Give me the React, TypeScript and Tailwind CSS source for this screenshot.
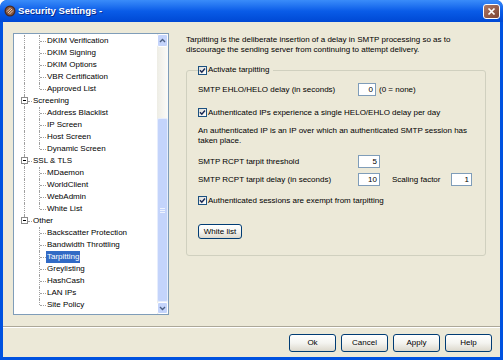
import React from 'react';

type Row = { label: string; kind: 'root' | 'child'; last?: boolean; rootLine?: 'full' | 'top' | 'none'; selected?: boolean };

const rows: Row[] = [
  { label: 'DKIM Verification', kind: 'child', rootLine: 'full' },
  { label: 'DKIM Signing', kind: 'child', rootLine: 'full' },
  { label: 'DKIM Options', kind: 'child', rootLine: 'full' },
  { label: 'VBR Certification', kind: 'child', rootLine: 'full' },
  { label: 'Approved List', kind: 'child', last: true, rootLine: 'full' },
  { label: 'Screening', kind: 'root', rootLine: 'full' },
  { label: 'Address Blacklist', kind: 'child', rootLine: 'full' },
  { label: 'IP Screen', kind: 'child', rootLine: 'full' },
  { label: 'Host Screen', kind: 'child', rootLine: 'full' },
  { label: 'Dynamic Screen', kind: 'child', last: true, rootLine: 'full' },
  { label: 'SSL & TLS', kind: 'root', rootLine: 'full' },
  { label: 'MDaemon', kind: 'child', rootLine: 'full' },
  { label: 'WorldClient', kind: 'child', rootLine: 'full' },
  { label: 'WebAdmin', kind: 'child', rootLine: 'full' },
  { label: 'White List', kind: 'child', last: true, rootLine: 'full' },
  { label: 'Other', kind: 'root', rootLine: 'top' },
  { label: 'Backscatter Protection', kind: 'child', rootLine: 'none' },
  { label: 'Bandwidth Throttling', kind: 'child', rootLine: 'none' },
  { label: 'Tarpitting', kind: 'child', rootLine: 'none', selected: true },
  { label: 'Greylisting', kind: 'child', rootLine: 'none' },
  { label: 'HashCash', kind: 'child', rootLine: 'none' },
  { label: 'LAN IPs', kind: 'child', rootLine: 'none' },
  { label: 'Site Policy', kind: 'child', last: true, rootLine: 'none' },
];

function TreeRow({ row }: { row: Row }) {
  return (
    <div className="relative h-[12px] leading-[12px] whitespace-nowrap">
      {/* tree connector lines */}
      {row.rootLine === 'full' && <span className="absolute left-[10px] top-0 h-[12px] border-l border-dotted border-[#a0a0a0]" />}
      {row.rootLine === 'top' && <span className="absolute left-[10px] top-0 h-[6px] border-l border-dotted border-[#a0a0a0]" />}
      {row.kind === 'child' && (
        <>
          <span className={`absolute left-[25px] top-0 border-l border-dotted border-[#a0a0a0] ${row.last ? 'h-[6px]' : 'h-[12px]'}`} />
          <span className="absolute left-[26px] top-[6px] w-[6px] border-t border-dotted border-[#a0a0a0]" />
        </>
      )}
      {row.kind === 'root' && (
        <>
          <span className="absolute left-[14px] top-[6px] w-[4px] border-t border-dotted border-[#a0a0a0]" />
          <span className="absolute left-[7px] top-[2px] w-[7px] h-[7px] bg-white border border-[#8a8a8a] flex items-center justify-center">
            <span className="w-[3px] h-[1px] bg-black" />
          </span>
        </>
      )}
      <span
        className={`absolute top-0 px-[1px] h-[12px] ${row.kind === 'root' ? 'left-[18px]' : 'left-[32px]'} ${
          row.selected ? 'bg-[#316ac5] text-white' : 'text-black'
        }`}
      >
        {row.label}
      </span>
    </div>
  );
}

function Arrow({ up }: { up?: boolean }) {
  return (
    <svg width="7" height="5" viewBox="0 0 7 5">
      <path d={up ? 'M1 4 L3.5 1.5 L6 4' : 'M1 1 L3.5 3.5 L6 1'} fill="none" stroke="#4d6185" strokeWidth="1.4" />
    </svg>
  );
}

function Scrollbar() {
  return (
    <div className="w-[11px] flex flex-col bg-gradient-to-r from-[#eeede5] to-[#fbfbf9]">
      <div className="h-[13px] rounded-[2px] border border-white bg-[#c4d4fb] flex items-center justify-center">
        <Arrow up />
      </div>
      <div className="h-[71px]" />
      <div className="h-[184px] rounded-[2px] border border-[#e6edfd] bg-[#c4d4fb] flex flex-col items-center justify-center gap-[1px]">
        <span className="w-[5px] h-[1px] bg-[#eef3fe]" />
        <span className="w-[5px] h-[1px] bg-[#eef3fe]" />
        <span className="w-[5px] h-[1px] bg-[#eef3fe]" />
      </div>
      <div className="h-[12px] rounded-[2px] border border-white bg-[#c4d4fb] flex items-center justify-center">
        <Arrow />
      </div>
    </div>
  );
}

function Check() {
  return (
    <span className="w-[9px] h-[9px] shrink-0 border border-[#1c5180] bg-gradient-to-br from-[#dcdcd7] to-white flex items-center justify-center">
      <svg width="7" height="7" viewBox="0 0 7 7">
        <path d="M1 3.3 L2.8 5.2 L6 1.6" fill="none" stroke="#1b2a55" strokeWidth="1.5" />
      </svg>
    </span>
  );
}

function Field({ value, w }: { value: string; w: string }) {
  return (
    <span className={`${w} h-[13px] bg-white border border-[#7f9db9] text-right pr-[2px] leading-[11px]`}>{value}</span>
  );
}

function XpButton({ label, w = 'w-[47px]', h = 'h-[18px]' }: { label: string; w?: string; h?: string }) {
  return (
    <button className={`${w} ${h} rounded-[3px] border border-[#003c74] bg-gradient-to-b from-white via-[#f4f4f0] to-[#dcd8cc] text-black text-[8px] leading-none`}>
      {label}
    </button>
  );
}

export default function App() {
  return (
    <div className="w-[503px] h-[360px] bg-[#0052e0] rounded-t-[7px] flex flex-col font-['Liberation_Sans',Arial,sans-serif] text-[8px] text-black overflow-hidden">
      {/* Title bar */}
      <div className="h-[22px] shrink-0 flex items-center rounded-t-[7px] bg-gradient-to-b from-[#3a8cf9] via-[#0a5ce8] to-[#0048d4] relative">
        <svg className="ml-[4px]" width="12" height="12" viewBox="0 0 12 12">
          <circle cx="6" cy="6" r="5.5" fill="#4a2a20" />
          <circle cx="6" cy="6" r="4.2" fill="#8a5a44" />
          <path d="M3 6.5 L6.5 3 M4 8 L8 4 M5.5 9 L9 5.5" stroke="#e8d0b8" strokeWidth="1" />
        </svg>
        <span className="ml-[2px] text-white font-bold text-[9.6px] [text-shadow:1px_1px_0_#0a2a8a]">
          Security Settings -
        </span>
        <div className="ml-auto mr-[3px] w-[17px] h-[15px] rounded-[3px] border border-white bg-gradient-to-br from-[#b07a66] to-[#7c4434] flex items-center justify-center">
          <svg width="9" height="9" viewBox="0 0 9 9">
            <path d="M1.5 1.5 L7.5 7.5 M7.5 1.5 L1.5 7.5" stroke="white" strokeWidth="1.7" />
          </svg>
        </div>
      </div>

      {/* Dialog body */}
      <div className="flex-1 mx-[3px] mb-[3px] bg-[#ece9d8] flex flex-col">
        <div className="h-[304px] flex pl-[10px] pt-[11px]">
          {/* Tree */}
          <div className="w-[156px] h-[282px] border border-[#7f9db9] bg-white flex">
            <div className="flex-1 pt-[1px] overflow-hidden">
              {rows.map((r) => (
                <TreeRow key={r.label} row={r} />
              ))}
            </div>
            <Scrollbar />
          </div>

          {/* Settings pane */}
          <div className="ml-[17px] w-[300px] pt-[2px]">
            <p className="leading-[10px]">
              Tarpitting is the deliberate insertion of a delay in SMTP processing so as to
              <br />
              discourage the sending server from continuing to attempt delivery.
            </p>

            <div className="relative mt-[15px] h-[186px] border border-[#d0d0bf] rounded-[3px] pl-[11px] pt-[12px]">
              <div className="absolute left-[11px] top-[-6px] h-[10px] pr-[4px] bg-[#ece9d8] flex items-center">
                <Check />
                <span className="ml-[1px]">Activate tarpitting</span>
              </div>

              <div className="h-[13px] flex items-center">
                <span className="w-[160px]">SMTP EHLO/HELO delay (in seconds)</span>
                <Field value="0" w="w-[18px]" />
                <span className="ml-[3px]">(0 = none)</span>
              </div>

              <div className="mt-[10px] h-[13px] flex items-center">
                <Check />
                <span className="ml-[1px]">Authenticated IPs experience a single HELO/EHLO delay per day</span>
              </div>

              <p className="mt-[7px] leading-[10px]">
                An authenticated IP is an IP over which an authenticated SMTP session has
                <br />
                taken place.
              </p>

              <div className="mt-[9px] h-[13px] flex items-center">
                <span className="w-[160px]">SMTP RCPT tarpit threshold</span>
                <Field value="5" w="w-[22px]" />
              </div>

              <div className="mt-[5px] h-[13px] flex items-center">
                <span className="w-[160px]">SMTP RCPT tarpit delay (in seconds)</span>
                <Field value="10" w="w-[22px]" />
                <span className="ml-[12px] w-[59px]">Scaling factor</span>
                <Field value="1" w="w-[21px]" />
              </div>

              <div className="mt-[8px] h-[13px] flex items-center">
                <Check />
                <span className="ml-[1px]">Authenticated sessions are exempt from tarpitting</span>
              </div>

              <div className="mt-[17px]">
                <XpButton label="White list" w="w-[44px]" h="h-[15px]" />
              </div>
            </div>
          </div>
        </div>

        <div className="h-[1px] bg-[#aca899]" />
        <div className="h-[1px] bg-white" />

        <div className="flex justify-end gap-[5px] pt-[6px] pr-[8px]">
          <XpButton label="Ok" />
          <XpButton label="Cancel" />
          <XpButton label="Apply" />
          <XpButton label="Help" />
        </div>
      </div>
    </div>
  );
}
